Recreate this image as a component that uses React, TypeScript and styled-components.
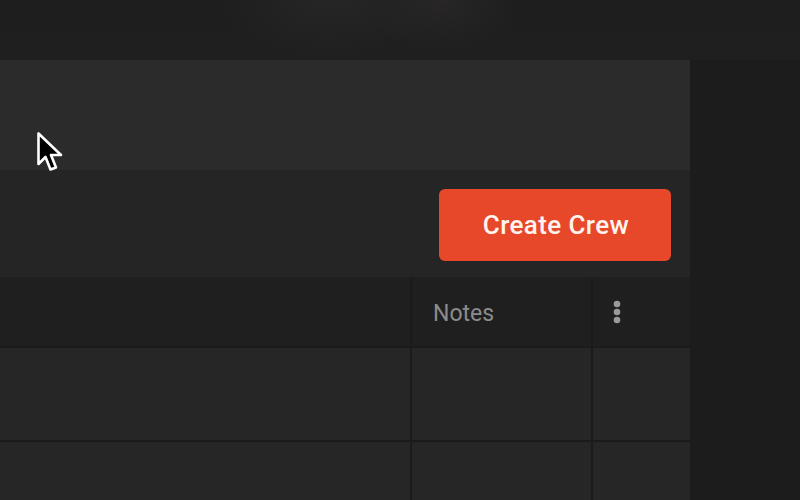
import React, { FunctionComponent } from "react"
import styled, { createGlobalStyle } from "styled-components"

const GlobalStyle = createGlobalStyle`
  html, body {
    margin: 0;
    padding: 0;
    background: #1c1c1c;
    font-family: Roboto, "Liberation Sans", sans-serif;
  }
`

const Page = styled.div`
  position: relative;
  width: 800px;
  height: 500px;
  overflow: hidden;
  background: #1c1c1c;
`

const Backdrop = styled.div`
  height: 60px;
  background: radial-gradient(ellipse 110px 60px at 330px 0px, #262626, transparent),
    radial-gradient(ellipse 80px 55px at 440px 0px, #282626, transparent),
    linear-gradient(180deg, #1e1e1e, #1f1f1f);
`

const Panel = styled.div`
  width: 690px;
  display: flex;
  flex-direction: column;
`

const TopBar = styled.div`
  height: 110px;
  background: #2b2b2b;
`

const Toolbar = styled.div`
  height: 107px;
  background: #252525;
  display: flex;
  align-items: center;
  justify-content: flex-end;
  padding-right: 19px;
  box-sizing: border-box;
`

const Button = styled.button`
  width: 232px;
  height: 72px;
  margin-top: 2px;
  padding: 0 0 0 2px;
  border: none;
  border-radius: 6px;
  background: #e8482a;
  color: #fff4ef;
  font-family: Roboto, "Liberation Sans", sans-serif;
  font-size: 26px;
  font-weight: 500;
  letter-spacing: 0.4px;
  cursor: pointer;
`

const Table = styled.div`
  display: grid;
  grid-template-columns: 410px 179px 97px;
  column-gap: 2px;
  row-gap: 2px;
  background: #1b1b1b;
`

const Cell = styled.div<{ $head?: boolean; $h: number }>`
  height: ${(p) => p.$h}px;
  background: ${(p) => (p.$head ? "#1f1f1f" : "#262626")};
  display: flex;
  align-items: center;
  padding: 3px 0 0 21px;
  box-sizing: border-box;
  color: #8c8c8c;
  font-size: 23px;
`

const DotsCell = styled(Cell)`
  padding: 1px 0 0 19px;
`

const Cursor = styled.svg`
  position: absolute;
  left: 36px;
  top: 131px;
`

const Dots: FunctionComponent = () => (
  <svg width="10" height="24" viewBox="0 0 10 24">
    <circle cx="5" cy="4" r="3.3" fill="#9a9a9a" />
    <circle cx="5" cy="12" r="3.3" fill="#9a9a9a" />
    <circle cx="5" cy="20" r="3.3" fill="#9a9a9a" />
  </svg>
)

const App: FunctionComponent = () => {
  return (
    <>
      <GlobalStyle />
      <Page>
        <Backdrop />
        <Panel>
          <TopBar />
          <Toolbar>
            <Button>Create Crew</Button>
          </Toolbar>
          <Table>
            <Cell $head $h={69} />
            <Cell $head $h={69}>Notes</Cell>
            <DotsCell $head $h={69}>
              <Dots />
            </DotsCell>
            <Cell $h={92} />
            <Cell $h={92} />
            <Cell $h={92} />
            <Cell $h={92} />
            <Cell $h={92} />
            <Cell $h={92} />
          </Table>
        </Panel>
        <Cursor width="30" height="44" viewBox="0 0 30 44">
          <path
            d="M2.5 2.5 L2.5 33 L9.5 26 L14.5 38.5 L20 36.5 L15 24 L25 24 Z"
            fill="#000"
            stroke="#fff"
            strokeWidth="2.6"
            strokeLinejoin="round"
          />
        </Cursor>
      </Page>
    </>
  )
}

export default App
